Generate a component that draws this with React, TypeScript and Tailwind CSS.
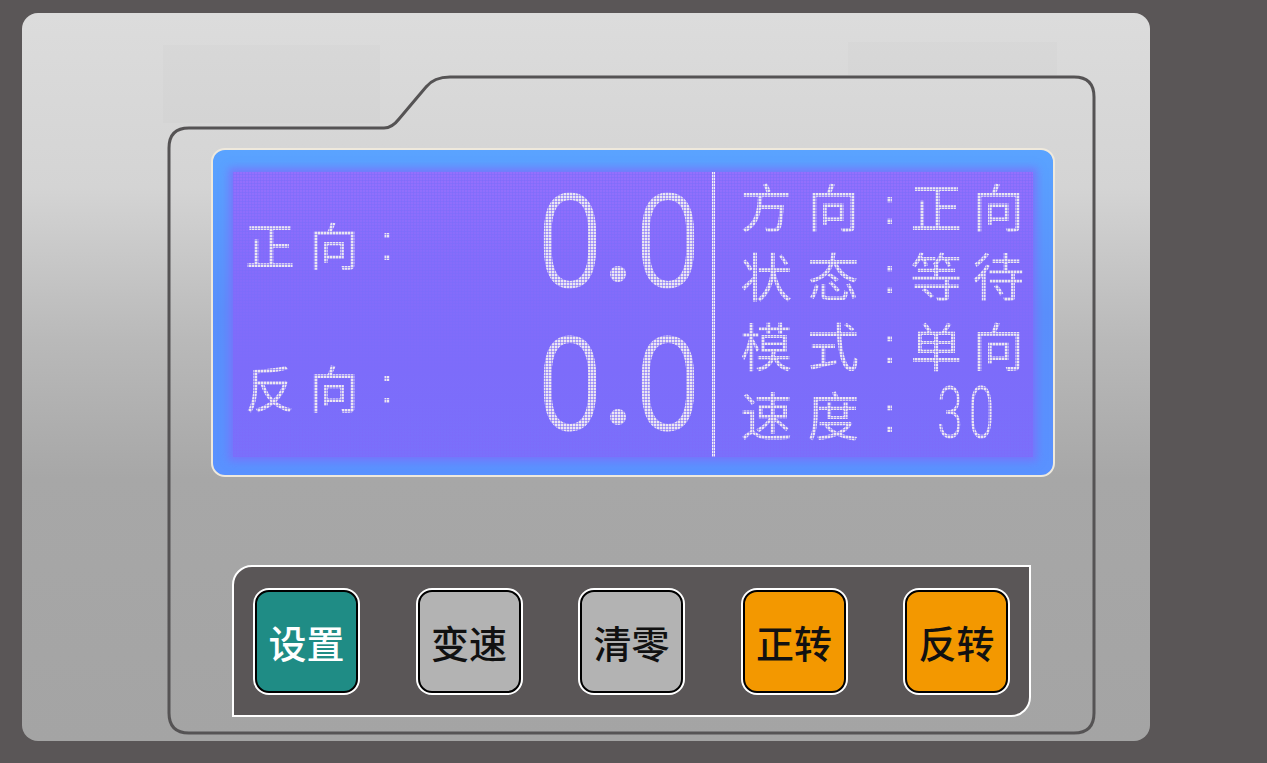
import { FC } from "react";

const cjk = "font-['Noto_Sans_CJK_SC','Noto_Sans',sans-serif]";

interface RowProps {
  a: string;
  b: string;
  c: string;
  d: string;
}

// one line of the right status column
const StatusRow: FC<RowProps> = ({ a, b, c, d }) => (
  <div className="flex h-[71px] items-start pl-[25px] text-[52px] leading-none">
    <span className="w-[67px]">{a}</span>
    <span className="w-[75px]">{b}</span>
    <span className="w-[28px] font-['Liberation_Sans',sans-serif]">:</span>
    <span className="w-[62px]">{c}</span>
    <span>{d}</span>
  </div>
);

const Reading: FC<{ label: string }> = ({ label }) => (
  <div className="flex flex-1 items-center pl-[12px]">
    <div className="flex w-[289px] items-center text-[50px] leading-none">
      <span className="w-[64px]">{label}</span>
      <span className="w-[71px]">向</span>
      <span className="font-['Liberation_Sans',sans-serif]">:</span>
    </div>
    <div className="flex items-center font-['Roboto',sans-serif] text-[130px] font-light leading-none [-webkit-text-stroke:1px_#ece6f2]">
      <span className="inline-block scale-x-90">0</span>
      <span className="ml-[4px] mr-[6px] mt-[62px] h-[16px] w-[16px] rounded-full bg-[#ece6f2]" />
      <span className="inline-block scale-x-90">0</span>
    </div>
  </div>
);

interface KeyProps {
  label: string;
  tone: "teal" | "gray" | "orange";
}

const Key: FC<KeyProps> = ({ label, tone }) => {
  const colors = {
    teal: "bg-[#1f8c85] text-white",
    gray: "bg-[#b3b3b3] text-[#111]",
    orange: "bg-[#f39800] text-[#111]",
  };
  return (
    <button
      className={`flex h-[103px] w-[103px] items-center justify-center rounded-[14px] border-2 border-black shadow-[0_0_0_2px_#fff] text-[38px] font-medium ${colors[tone]}`}
    >
      {label}
    </button>
  );
};

export default function App() {
  return (
    <div className={`h-[763px] w-[1267px] bg-[#5a5657] pl-[22px] pt-[13px] ${cjk}`}>
      <div className="relative h-[728px] w-[1128px] rounded-[16px] bg-[linear-gradient(180deg,#dcdcdc_0%,#d4d4d4_24%,#b9b9b9_45%,#a7a7a7_64%,#a4a4a4_100%)]">
        <svg
          className="pointer-events-none absolute inset-0"
          width="1128"
          height="728"
          viewBox="0 0 1128 728"
        >
          <rect x="141" y="32" width="217" height="78" fill="#000" opacity="0.012" />
          <rect x="826" y="29" width="209" height="33" fill="#000" opacity="0.01" />
          <path
            d="M147 135 Q147 115 167 115 L362 115 Q370 115 377 106 L404 74 Q412 64 428 64 L1052 64 Q1072 64 1072 84 L1072 700 Q1072 720 1052 720 L167 720 Q147 720 147 700 Z"
            fill="none"
            stroke="#555354"
            strokeWidth="3"
          />
        </svg>

        <div className="relative flex flex-col pl-[189px] pt-[135px]">
          {/* LCD */}
          <div className="h-[329px] w-[844px] rounded-[14px] border-2 border-[#efe9dc] bg-[linear-gradient(180deg,#5aa3ff_0%,#5a8ffb_50%,#5a92ff_100%)] px-[20px] pb-[18px] pt-[22px]">
            <div className="relative flex h-[285px] w-[800px] bg-[linear-gradient(180deg,#9470fd_0%,#866cfb_30%,#7d6cfa_70%,#7a70fb_100%)] text-[#ece6f2] shadow-[0_0_8px_4px_rgba(125,110,250,0.8)]">
              <div className="flex w-[482px] flex-col">
                <Reading label="正" />
                <Reading label="反" />
              </div>
              <div className="h-full w-[3px] bg-[#f4f0f6]" />
              <div className="flex flex-col pt-[8px]">
                <StatusRow a="方" b="向" c="正" d="向" />
                <StatusRow a="状" b="态" c="等" d="待" />
                <StatusRow a="模" b="式" c="单" d="向" />
                <div className="flex h-[71px] items-start pl-[25px] text-[52px] leading-none">
                  <span className="w-[67px]">速</span>
                  <span className="w-[75px]">度</span>
                  <span className="w-[55px] font-['Liberation_Sans',sans-serif]">:</span>
                  <span className="inline-block origin-left scale-x-65 font-['Roboto',sans-serif] text-[72px] font-light leading-[52px] tracking-[8px]">
                    30
                  </span>
                </div>
              </div>
              <div className="pointer-events-none absolute inset-0 bg-[repeating-linear-gradient(90deg,rgba(124,108,250,0.55)_0_1px,transparent_1px_3px),repeating-linear-gradient(0deg,rgba(124,108,250,0.55)_0_1px,transparent_1px_3px)]" />
            </div>
          </div>

          {/* keypad */}
          <div className="ml-[21px] mt-[88px] flex h-[152px] w-[799px] items-center justify-between rounded-br-[20px] rounded-tl-[20px] border-2 border-white bg-[#5a5657] px-[21px]">
            <Key label="设置" tone="teal" />
            <Key label="变速" tone="gray" />
            <Key label="清零" tone="gray" />
            <Key label="正转" tone="orange" />
            <Key label="反转" tone="orange" />
          </div>
        </div>
      </div>
    </div>
  );
}
